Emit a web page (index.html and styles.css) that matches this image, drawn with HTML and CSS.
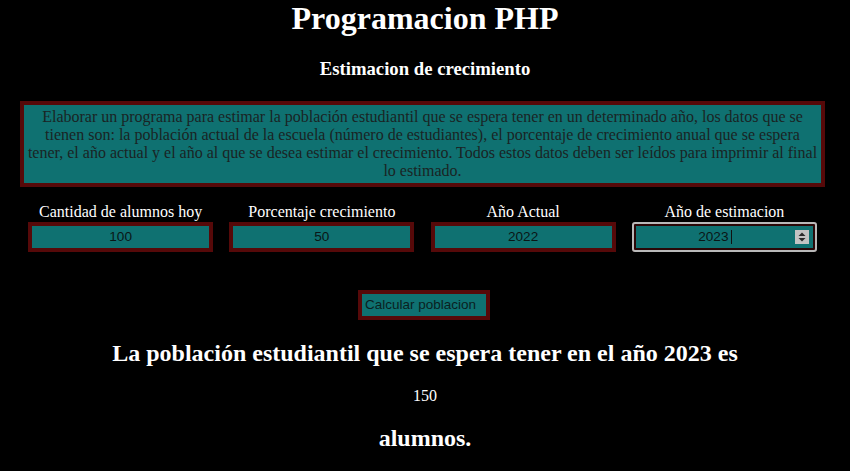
FILE: index.html
```html
<!DOCTYPE html>
<html lang="es">
<head>
<meta charset="utf-8">
<title>Programacion PHP</title>
<link rel="stylesheet" href="styles.css">
</head>
<body>
<h1 class="title">Programacion PHP</h1>
<h3 class="subtitle">Estimacion de crecimiento</h3>
<p class="desc">Elaborar un programa para estimar la población estudiantil que se espera tener en un determinado año, los datos que se tienen son: la población actual de la escuela (número de estudiantes), el porcentaje de crecimiento anual que se espera<br>tener, el año actual y el año al que se desea estimar el crecimiento. Todos estos datos deben ser leídos para imprimir al final lo estimado.</p>
<form class="form">
  <div class="fields">
    <div class="field">
      <label class="label">Cantidad de alumnos hoy</label>
      <input class="input" type="text" value="100">
    </div>
    <div class="field">
      <label class="label">Porcentaje crecimiento</label>
      <input class="input" type="text" value="50">
    </div>
    <div class="field">
      <label class="label">Año Actual</label>
      <input class="input" type="text" value="2022">
    </div>
    <div class="field">
      <label class="label">Año de estimacion</label>
      <div class="input-wrap">
        <input class="input input-focused" type="text" value="2023">
        <span class="caret"></span>
        <span class="spinner">
          <svg width="14" height="14" viewBox="0 0 14 14"><rect width="14" height="14" fill="#c3c3c3"/><path d="M3.5 6 L7 2.5 L10.5 6 Z" fill="#2a2a2a"/><path d="M3.5 8 L7 11.5 L10.5 8 Z" fill="#2a2a2a"/></svg>
        </span>
      </div>
    </div>
  </div>
  <div class="actions">
    <button class="button" type="button">Calcular poblacion</button>
  </div>
</form>
<h2 class="result">La población estudiantil que se espera tener en el año 2023 es</h2>
<p class="value">150</p>
<h2 class="result">alumnos.</h2>
</body>
</html>
```
FILE: styles.css
```css
html, body {
  margin: 0;
  padding: 0;
  background: #000;
}
body {
  font-family: "Liberation Serif", "Times New Roman", serif;
  color: #fff;
  font-size: 16px;
}
.title {
  margin: 0 0 21.44px;
  font-size: 32px;
  text-align: center;
}
.subtitle {
  margin: 18.72px 0;
  font-size: 18.72px;
  text-align: center;
}
.desc {
  margin: 21px 25px 0 20px;
  border: 4px solid #560909;
  background: #0f7171;
  color: #1a2424;
  padding: 3px 2px;
  text-align: center;
}
.form {
  margin: 16px 25px 0 20px;
}
.fields {
  display: grid;
  grid-template-columns: repeat(4, 1fr);
}
.field {
  display: flex;
  flex-direction: column;
  align-items: center;
}
.label {
  line-height: 18.5px;
}
.input {
  box-sizing: border-box;
  width: 185px;
  height: 30px;
  border: 4px solid #560909;
  background: #0f7171;
  color: #0a1616;
  font-family: "Liberation Sans", Arial, sans-serif;
  font-size: 13.6px;
  text-align: center;
  padding: 0 2px;
  margin: 0;
}
.input-wrap {
  position: relative;
  display: flex;
}
.input-focused {
  border-color: #2a0707;
  border-radius: 3px;
  outline: 2px solid #b9b9b9;
  outline-offset: -2px;
  padding-right: 24px;
}
.caret {
  position: absolute;
  left: 99px;
  top: 8px;
  width: 1px;
  height: 14px;
  background: #111;
}
.spinner {
  position: absolute;
  right: 8px;
  top: 8px;
  width: 14px;
  height: 14px;
  display: block;
}
.spinner svg {
  display: block;
}
.actions {
  margin-top: 38px;
  display: flex;
  justify-content: center;
  padding-left: 3px;
}
.button {
  box-sizing: border-box;
  width: 132px;
  height: 30px;
  border: 4px solid #560909;
  background: #0f7171;
  color: #0a1f1f;
  font-family: "Liberation Sans", Arial, sans-serif;
  font-size: 13.5px;
  text-align: left;
  padding: 0 3px;
  margin: 0;
}
.result {
  margin: 19.92px 0;
  font-size: 24px;
  text-align: center;
}
.value {
  margin: 16px 0;
  text-align: center;
}
```
